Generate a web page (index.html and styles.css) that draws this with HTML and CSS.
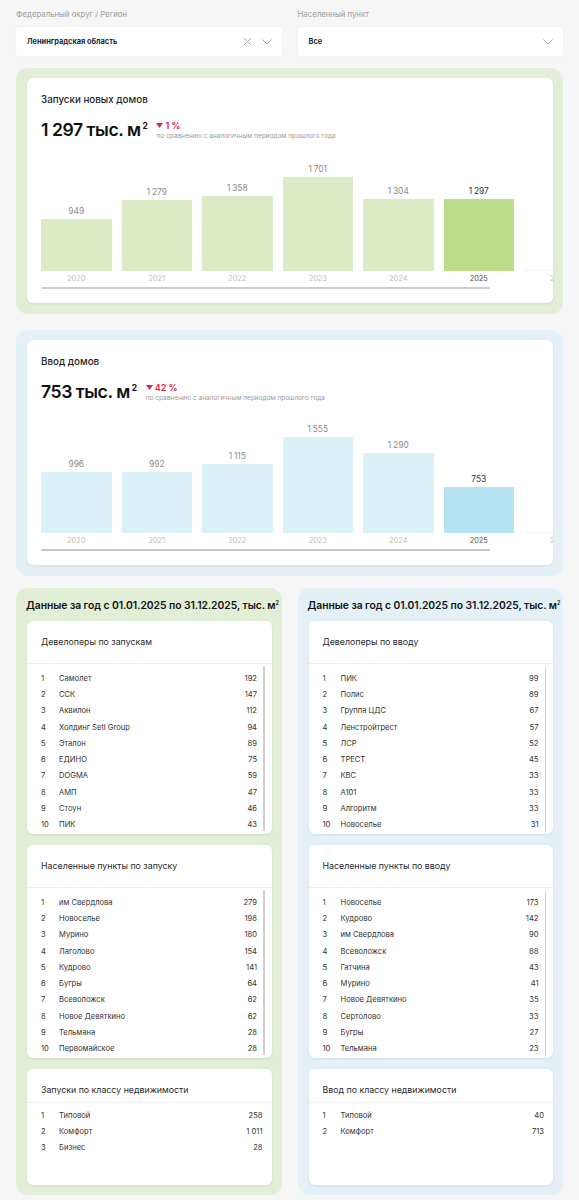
FILE: index.html
```html
<!DOCTYPE html>
<html lang="ru">
<head>
<meta charset="utf-8">
<title>Строительство</title>
<link rel="stylesheet" href="styles.css">
</head>
<body>
<div class="page">
  <div class="filters">
    <div class="filter">
      <div class="filter-label">Федеральный округ / Регион</div>
      <div class="select">
        <span class="select-value">Ленинградская область</span>
        <span class="select-icons">
          <svg class="ico-x" width="9" height="9" viewBox="0 0 9 9"><path d="M1 1L8 8M8 1L1 8" stroke="#a4a9ad" stroke-width="1" fill="none"/></svg>
          <svg class="ico-chev" width="10" height="6" viewBox="0 0 10 6"><path d="M0.5 0.5L5 5L9.5 0.5" stroke="#a4a9ad" stroke-width="1" fill="none"/></svg>
        </span>
      </div>
    </div>
    <div class="filter">
      <div class="filter-label">Населенный пункт</div>
      <div class="select">
        <span class="select-value">Все</span>
        <span class="select-icons">
          <svg class="ico-chev" width="10" height="6" viewBox="0 0 10 6"><path d="M0.5 0.5L5 5L9.5 0.5" stroke="#a4a9ad" stroke-width="1" fill="none"/></svg>
        </span>
      </div>
    </div>
  </div>

  <section class="panel panel-green chart-panel">
    <div class="card chart-card">
      <h3 class="card-title">Запуски новых домов</h3>
      <div class="value-row">
        <div class="big-value">1 297 тыс. м<sup>2</sup></div>
        <div class="delta">
          <div class="delta-pct"><svg width="7" height="5" viewBox="0 0 7 5"><path d="M0 0H7L3.5 5Z" fill="#e0234a"/></svg>1 %</div>
          <div class="delta-note">по сравнению с аналогичным периодом прошлого года</div>
        </div>
      </div>
      <div class="bars bars-green">
        <div class="col"><div class="bar-val">949</div><div class="bar" style="height:52px"></div><div class="bar-year">2020</div></div>
        <div class="col"><div class="bar-val">1 279</div><div class="bar" style="height:71px"></div><div class="bar-year">2021</div></div>
        <div class="col"><div class="bar-val">1 358</div><div class="bar" style="height:75px"></div><div class="bar-year">2022</div></div>
        <div class="col"><div class="bar-val">1 701</div><div class="bar" style="height:94px"></div><div class="bar-year">2023</div></div>
        <div class="col"><div class="bar-val">1 304</div><div class="bar" style="height:72px"></div><div class="bar-year">2024</div></div>
        <div class="col col-current"><div class="bar-val">1 297</div><div class="bar" style="height:72px"></div><div class="bar-year">2025</div></div>
        <div class="col col-empty"><div class="bar-val"></div><div class="bar" style="height:1px"></div><div class="bar-year">2026</div></div>
      </div>
      <div class="scroll-thumb"></div>
    </div>
  </section>

  <section class="panel panel-blue chart-panel">
    <div class="card chart-card">
      <h3 class="card-title">Ввод домов</h3>
      <div class="value-row">
        <div class="big-value">753 тыс. м<sup>2</sup></div>
        <div class="delta">
          <div class="delta-pct"><svg width="7" height="5" viewBox="0 0 7 5"><path d="M0 0H7L3.5 5Z" fill="#e0234a"/></svg>42 %</div>
          <div class="delta-note">по сравнению с аналогичным периодом прошлого года</div>
        </div>
      </div>
      <div class="bars bars-blue">
        <div class="col"><div class="bar-val">996</div><div class="bar" style="height:61px"></div><div class="bar-year">2020</div></div>
        <div class="col"><div class="bar-val">992</div><div class="bar" style="height:61px"></div><div class="bar-year">2021</div></div>
        <div class="col"><div class="bar-val">1 115</div><div class="bar" style="height:69px"></div><div class="bar-year">2022</div></div>
        <div class="col"><div class="bar-val">1 555</div><div class="bar" style="height:96px"></div><div class="bar-year">2023</div></div>
        <div class="col"><div class="bar-val">1 290</div><div class="bar" style="height:80px"></div><div class="bar-year">2024</div></div>
        <div class="col col-current"><div class="bar-val">753</div><div class="bar" style="height:46px"></div><div class="bar-year">2025</div></div>
        <div class="col col-empty"><div class="bar-val"></div><div class="bar" style="height:1px"></div><div class="bar-year">2026</div></div>
      </div>
      <div class="scroll-thumb scroll-thumb-blue"></div>
    </div>
  </section>

  <div class="stats">
    <section class="panel panel-green stats-panel">
      <h2 class="stats-title">Данные за год с 01.01.2025 по 31.12.2025, тыс. м<sup>2</sup></h2>
      <div class="list-card">
        <div class="list-head">Девелоперы по запускам</div>
        <div class="list-body">
          <div class="rows">
            <div class="row"><span class="num">1</span><span class="name">Самолет</span><span class="val">192</span></div>
            <div class="row"><span class="num">2</span><span class="name">ССК</span><span class="val">147</span></div>
            <div class="row"><span class="num">3</span><span class="name">Аквилон</span><span class="val">112</span></div>
            <div class="row"><span class="num">4</span><span class="name">Холдинг Setl Group</span><span class="val">94</span></div>
            <div class="row"><span class="num">5</span><span class="name">Эталон</span><span class="val">89</span></div>
            <div class="row"><span class="num">6</span><span class="name">ЕДИНО</span><span class="val">75</span></div>
            <div class="row"><span class="num">7</span><span class="name">DOGMA</span><span class="val">59</span></div>
            <div class="row"><span class="num">8</span><span class="name">АМП</span><span class="val">47</span></div>
            <div class="row"><span class="num">9</span><span class="name">Стоун</span><span class="val">46</span></div>
            <div class="row"><span class="num">10</span><span class="name">ПИК</span><span class="val">43</span></div>
          </div>
          <div class="vscroll"></div>
        </div>
      </div>
      <div class="list-card">
        <div class="list-head">Населенные пункты по запуску</div>
        <div class="list-body">
          <div class="rows">
            <div class="row"><span class="num">1</span><span class="name">им Свердлова</span><span class="val">279</span></div>
            <div class="row"><span class="num">2</span><span class="name">Новоселье</span><span class="val">198</span></div>
            <div class="row"><span class="num">3</span><span class="name">Мурино</span><span class="val">180</span></div>
            <div class="row"><span class="num">4</span><span class="name">Лаголово</span><span class="val">154</span></div>
            <div class="row"><span class="num">5</span><span class="name">Кудрово</span><span class="val">141</span></div>
            <div class="row"><span class="num">6</span><span class="name">Бугры</span><span class="val">64</span></div>
            <div class="row"><span class="num">7</span><span class="name">Всеволожск</span><span class="val">62</span></div>
            <div class="row"><span class="num">8</span><span class="name">Новое Девяткино</span><span class="val">62</span></div>
            <div class="row"><span class="num">9</span><span class="name">Тельмана</span><span class="val">28</span></div>
            <div class="row"><span class="num">10</span><span class="name">Первомайское</span><span class="val">28</span></div>
          </div>
          <div class="vscroll"></div>
        </div>
      </div>
      <div class="list-card list-card-short">
        <div class="list-head">Запуски по классу недвижимости</div>
        <div class="list-body">
          <div class="rows">
            <div class="row"><span class="num">1</span><span class="name">Типовой</span><span class="val">258</span></div>
            <div class="row"><span class="num">2</span><span class="name">Комфорт</span><span class="val">1 011</span></div>
            <div class="row"><span class="num">3</span><span class="name">Бизнес</span><span class="val">28</span></div>
          </div>
        </div>
      </div>
    </section>

    <section class="panel panel-blue stats-panel">
      <h2 class="stats-title">Данные за год с 01.01.2025 по 31.12.2025, тыс. м<sup>2</sup></h2>
      <div class="list-card">
        <div class="list-head">Девелоперы по вводу</div>
        <div class="list-body">
          <div class="rows">
            <div class="row"><span class="num">1</span><span class="name">ПИК</span><span class="val">99</span></div>
            <div class="row"><span class="num">2</span><span class="name">Полис</span><span class="val">89</span></div>
            <div class="row"><span class="num">3</span><span class="name">Группа ЦДС</span><span class="val">67</span></div>
            <div class="row"><span class="num">4</span><span class="name">Ленстройтрест</span><span class="val">57</span></div>
            <div class="row"><span class="num">5</span><span class="name">ЛСР</span><span class="val">52</span></div>
            <div class="row"><span class="num">6</span><span class="name">ТРЕСТ</span><span class="val">45</span></div>
            <div class="row"><span class="num">7</span><span class="name">КВС</span><span class="val">33</span></div>
            <div class="row"><span class="num">8</span><span class="name">А101</span><span class="val">33</span></div>
            <div class="row"><span class="num">9</span><span class="name">Алгоритм</span><span class="val">33</span></div>
            <div class="row"><span class="num">10</span><span class="name">Новоселье</span><span class="val">31</span></div>
          </div>
          <div class="vscroll"></div>
        </div>
      </div>
      <div class="list-card">
        <div class="list-head">Населенные пункты по вводу</div>
        <div class="list-body">
          <div class="rows">
            <div class="row"><span class="num">1</span><span class="name">Новоселье</span><span class="val">173</span></div>
            <div class="row"><span class="num">2</span><span class="name">Кудрово</span><span class="val">142</span></div>
            <div class="row"><span class="num">3</span><span class="name">им Свердлова</span><span class="val">90</span></div>
            <div class="row"><span class="num">4</span><span class="name">Всеволожск</span><span class="val">88</span></div>
            <div class="row"><span class="num">5</span><span class="name">Гатчина</span><span class="val">43</span></div>
            <div class="row"><span class="num">6</span><span class="name">Мурино</span><span class="val">41</span></div>
            <div class="row"><span class="num">7</span><span class="name">Новое Девяткино</span><span class="val">35</span></div>
            <div class="row"><span class="num">8</span><span class="name">Сертолово</span><span class="val">33</span></div>
            <div class="row"><span class="num">9</span><span class="name">Бугры</span><span class="val">27</span></div>
            <div class="row"><span class="num">10</span><span class="name">Тельмана</span><span class="val">23</span></div>
          </div>
          <div class="vscroll"></div>
        </div>
      </div>
      <div class="list-card list-card-short">
        <div class="list-head">Ввод по классу недвижимости</div>
        <div class="list-body">
          <div class="rows">
            <div class="row"><span class="num">1</span><span class="name">Типовой</span><span class="val">40</span></div>
            <div class="row"><span class="num">2</span><span class="name">Комфорт</span><span class="val">713</span></div>
          </div>
        </div>
      </div>
    </section>
  </div>
</div>
</body>
</html>
```

FILE: styles.css
```css
* { box-sizing: border-box; }

body {
  margin: 0;
  background: #f6f6f6;
  font-family: Inter, "Noto Sans", "Liberation Sans", sans-serif;
  color: #222;
}

.page {
  padding: 8px 16px 6px;
}

/* Filters */
.filters {
  display: grid;
  grid-template-columns: minmax(0, 1fr) minmax(0, 1fr);
  gap: 16px;
}

.filter-label {
  font-size: 7.8px;
  line-height: 12px;
  color: #9b9b9b;
  margin-bottom: 7px;
}

.select {
  height: 29px;
  background: #fff;
  border-radius: 3px;
  box-shadow: 0 0 2px rgba(0, 0, 0, 0.06);
  display: flex;
  align-items: center;
  justify-content: space-between;
  padding: 0 10px 0 11px;
}

.select-value {
  font-size: 7.4px;
  font-weight: 700;
  color: #1d2c36;
}

.select-icons {
  display: flex;
  align-items: center;
  gap: 10px;
}

.select-icons svg { display: block; }

/* Panels */
.panel {
  border-radius: 12px;
  padding: 10px 10px 11px 11px;
}

.panel-green { background: #e3eed6; }
.panel-blue { background: #e3f1f6; }

.filters + .chart-panel { margin-top: 12px; }
.chart-panel + .chart-panel { margin-top: 16px; }

.card {
  background: #fff;
  border-radius: 6px;
  box-shadow: 0 1px 3px rgba(0, 0, 0, 0.08);
}

.chart-card {
  padding: 15px 0 14px 14px;
  overflow: hidden;
}

.card-title {
  margin: 0;
  font-size: 9.8px;
  line-height: 14px;
  font-weight: 500;
  color: #1e1e1e;
}

.value-row {
  margin-top: 8px;
  height: 30px;
  display: flex;
  align-items: center;
}

.big-value {
  font-size: 17.6px;
  line-height: 30px;
  font-weight: 600;
  color: #111;
  letter-spacing: -0.45px;
}

.big-value sup {
  font-size: 8.5px;
  font-weight: 700;
  vertical-align: 7px;
  line-height: 0;
  margin-left: 2px;
}

.delta {
  margin-left: 9px;
  padding-top: 1px;
}

.delta-pct {
  display: flex;
  align-items: center;
  gap: 2px;
  font-size: 9px;
  line-height: 11px;
  font-weight: 600;
  color: #e0234a;
}

.delta-pct svg { display: block; }

.delta-note {
  margin-top: 1px;
  font-size: 6.5px;
  line-height: 9px;
  color: #9a9a9a;
}

/* Bars */
.bars {
  height: 139px;
  display: flex;
  align-items: flex-end;
  gap: 10px;
  overflow: hidden;
}

.col {
  flex: 0 0 70.5px;
  display: flex;
  flex-direction: column;
  align-items: stretch;
}

.bar-val {
  font-size: 8.4px;
  line-height: 11px;
  color: #8a8a8a;
  text-align: center;
  margin-bottom: 2px;
  word-spacing: -0.5px;
}

.bar-year {
  font-size: 7.4px;
  line-height: 10px;
  color: #bdbdbd;
  text-align: center;
  margin-top: 3px;
}

.col-current .bar-val { color: #333; }
.col-current .bar-year { color: #555; }

.bars-green .bar { background: #dcebc6; }
.bars-green .col-current .bar { background: #bbdc8b; }
.bars-blue .bar { background: #daf1f8; }
.bars-blue .col-current .bar { background: #b5e3f2; }
.bars .col-empty .bar { background: #eef3f3; }

.scroll-thumb {
  margin-top: 3px;
  width: 449px;
  height: 2px;
  border-radius: 1px;
  background: #cbcbd2;
}

.scroll-thumb-blue { background: #c9c6dc; }

/* Stats */
.stats {
  margin-top: 12px;
  display: grid;
  grid-template-columns: minmax(0, 1fr) minmax(0, 1fr);
  gap: 16px;
  align-items: start;
}

.stats-panel {
  padding: 10px 10px 10px 11px;
  min-width: 0;
}

.stats-title {
  margin: 0 0 9px -1px;
  font-size: 10.35px;
  line-height: 14px;
  font-weight: 600;
  color: #121212;
  white-space: nowrap;
  letter-spacing: -0.05px;
}

.stats-title sup {
  font-size: 5.5px;
  vertical-align: 4px;
  line-height: 0;
}

.list-card {
  background: #fff;
  border-radius: 6px;
  box-shadow: 0 1px 3px rgba(0, 0, 0, 0.08);
  height: 213px;
  display: flex;
  flex-direction: column;
}

.list-card + .list-card { margin-top: 11px; }

.list-head {
  padding: 14px 14px 15px;
  font-size: 8.8px;
  line-height: 13px;
  color: #2a2a2a;
  border-bottom: 1px solid #f0f0f0;
}

.list-body {
  flex: 1;
  display: flex;
  padding: 6px 0 0 14px;
  min-height: 0;
}

.rows {
  flex: 1;
  padding-right: 6px;
}

.row {
  display: flex;
  height: 16.3px;
  align-items: center;
  font-size: 7.6px;
  color: #333;
}

.num { width: 18px; flex: 0 0 18px; }
.name { flex: 1; }
.val { text-align: right; }

.vscroll {
  width: 1.5px;
  margin: -4px 7px 3px 0;
  background: #cfcfcf;
  border-radius: 1px;
}

.list-card-short {
  height: 116px;
}

.list-card-short .list-head {
  padding-bottom: 6px;
}

.list-card-short .list-body {
  padding-top: 4px;
}

.list-card-short .rows {
  padding-right: 9px;
}
```
